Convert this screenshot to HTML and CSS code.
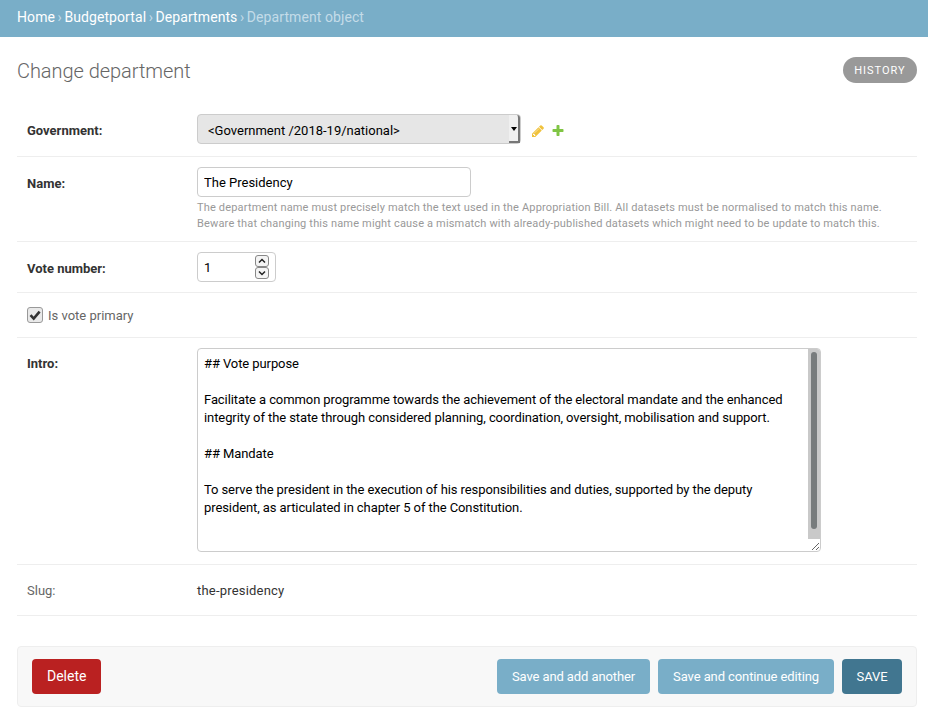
FILE: index.html
```html
<!DOCTYPE html>
<html lang="en">
<head>
  <meta charset="UTF-8" />
  <title>Change department</title>
  <link rel="stylesheet" href="styles.css">
</head>
<body>

  <div class="breadcrumbs">
    <a href="#">Home</a> <span class="sep">›</span>
    <a href="#">Budgetportal</a> <span class="sep">›</span>
    <a href="#">Departments</a> <span class="sep">›</span>
    Department object
  </div>

  <div class="content">
    <div class="title-row">
      <h1>Change department</h1>
      <a class="history" href="#">History</a>
    </div>

    <form>
      <div class="form-row row-government">
        <label class="field-label">Government:</label>
        <div class="select-wrap">
          <select class="select">
            <option>&lt;Government /2018-19/national&gt;</option>
          </select>
          <span class="select-btn"><span class="select-arrow"></span></span>
        </div>
        <a class="rel-link" href="#">
          <svg width="14" height="14" viewBox="0 0 1792 1792"><path fill="#f0c23c" d="M491 1536l91-91-235-235-91 91v107h128v128h107zm523-928q0-22-22-22-10 0-17 7l-542 542q-7 7-7 17 0 22 22 22 10 0 17-7l542-542q7-7 7-17zm-54-192l416 416-832 832h-416v-416zm683 96q0 53-37 90l-166 166-416-416 166-165q36-38 90-38 53 0 91 38l235 234q37 39 37 91z"/></svg>
        </a>
        <a class="rel-link" href="#">
          <svg width="14" height="14" viewBox="0 0 1792 1792"><path fill="#80c544" d="M1600 736v192q0 40-28 68t-68 28h-416v416q0 40-28 68t-68 28h-192q-40 0-68-28t-28-68v-416h-416q-40 0-68-28t-28-68v-192q0-40 28-68t68-28h416v-416q0-40 28-68t68-28h192q40 0 68 28t28 68v416h416q40 0 68 28t28 68z"/></svg>
        </a>
      </div>

      <div class="form-row row-name">
        <label class="field-label label-input">Name:</label>
        <div>
          <input class="text-input name-input" type="text" value="The Presidency" />
          <p class="help">The department name must precisely match the text used in the Appropriation Bill. All datasets must be normalised to match this name.<br>Beware that changing this name might cause a mismatch with already-published datasets which might need to be update to match this.</p>
        </div>
      </div>

      <div class="form-row">
        <label class="field-label label-input">Vote number:</label>
        <div class="number-wrap">
          <input class="text-input number-input" type="text" value="1" />
          <span class="spinner">
            <span class="spin-btn"><svg width="8" height="6" viewBox="0 0 8 6"><path d="M1 4.5 4 1.5 7 4.5" fill="none" stroke="#222" stroke-width="1.5"/></svg></span>
            <span class="spin-btn"><svg width="8" height="6" viewBox="0 0 8 6"><path d="M1 1.5 4 4.5 7 1.5" fill="none" stroke="#222" stroke-width="1.5"/></svg></span>
          </span>
        </div>
      </div>

      <div class="form-row row-check">
        <span class="checkbox">
          <svg width="12" height="12" viewBox="0 0 12 12"><path d="M1.5 6.2 4.7 9.6 10.6 2.6" fill="none" stroke="#333" stroke-width="2.6"/></svg>
        </span>
        <label class="check-label">Is vote primary</label>
      </div>

      <div class="form-row row-intro">
        <label class="field-label label-intro">Intro:</label>
        <div class="intro-wrap">
          <textarea class="intro" spellcheck="false">## Vote purpose

Facilitate a common programme towards the achievement of the electoral mandate and the enhanced integrity of the state through considered planning, coordination, oversight, mobilisation and support.

## Mandate

To serve the president in the execution of his responsibilities and duties, supported by the deputy president, as articulated in chapter 5 of the Constitution.</textarea>
          <span class="scrollbar"><span class="scrollbar-thumb"></span></span>
        </div>
      </div>

      <div class="form-row row-slug">
        <label class="slug-label">Slug:</label>
        <div class="readonly">the-presidency</div>
      </div>

      <div class="submit-row">
        <a class="btn btn-delete" href="#">Delete</a>
        <span class="spacer"></span>
        <a class="btn" href="#">Save and add another</a>
        <a class="btn" href="#">Save and continue editing</a>
        <a class="btn btn-save" href="#">SAVE</a>
      </div>
    </form>
  </div>

</body>
</html>
```

FILE: styles.css
```css
* { box-sizing: border-box; }
html, body { height: 710px; overflow: hidden; }
body { margin: 0; font-family: Roboto, "Liberation Sans", sans-serif; font-size: 14px; color: #333; background: #fff; }
a { text-decoration: none; }

.breadcrumbs { height: 37px; padding: 0 17px; background: #79aec8; color: #c4dce8; font-size: 14px; line-height: 34px; letter-spacing: 0.08px; }
.breadcrumbs a { color: #fff; }
.breadcrumbs .sep { margin: 0 -1px; }

.content { padding: 0 11px 0 17px; }
.title-row { display: flex; justify-content: space-between; align-items: flex-start; height: 67px; padding-top: 20px; }
h1 { margin: 0; font-size: 20px; font-weight: 300; line-height: 28px; letter-spacing: -0.05px; color: #666; }
.history { display: block; width: 74px; height: 26px; border-radius: 13px; background: #999; color: #fff; font-size: 11px; line-height: 27px; letter-spacing: 1px; text-align: center; text-transform: uppercase; }

.form-row { display: flex; padding: 10px; border-bottom: 1px solid #eee; font-size: 13px; }
.field-label { width: 170px; flex: none; font-weight: 700; color: #333; }
.label-input { padding-top: 9px; line-height: 16px; }
.label-intro { padding-top: 8px; line-height: 16px; }

.row-government { align-items: center; height: 53px; }
.select-wrap { position: relative; width: 324px; height: 30px; align-self: flex-start; }
.select { display: block; width: 100%; height: 30px; padding: 2px 10px 0; border: 1px solid #ccc; border-radius: 4px; background: #e6e6e6; appearance: none; font-family: Roboto, sans-serif; font-size: 13px; color: #000; }
.select-btn { position: absolute; top: 1px; right: 1px; width: 11px; height: 28px; display: flex; justify-content: center; padding-top: 10px; background: #f0f0f0; border-right: 2px solid #777; border-bottom: 2px solid #777; border-top-right-radius: 3px; }
.select-arrow { width: 0; height: 0; border-left: 3px solid transparent; border-right: 3px solid transparent; border-top: 4px solid #000; margin-top: 2px; }
.rel-link { display: flex; margin: 1px 0 0 10px; }
.rel-link + .rel-link { margin-left: 6px; }

.text-input { display: block; height: 30px; padding: 0 6px; border: 1px solid #ccc; border-radius: 4px; background: #fff; font-family: Roboto, sans-serif; font-size: 13px; color: #000; }
.name-input { width: 274px; }
.row-name { padding-bottom: 9px; }
.help { margin: 3px 0 0; font-size: 11px; line-height: 16px; letter-spacing: 0.17px; color: #999; }

.number-wrap { position: relative; width: 79px; }
.number-input { width: 79px; }
.spinner { position: absolute; top: 3px; right: 7px; display: flex; flex-direction: column; }
.spin-btn { display: flex; align-items: center; justify-content: center; width: 14px; height: 12px; border: 1px solid #888; border-radius: 3px; background: #f4f4f4; }

.row-check { align-items: center; height: 45px; }
.checkbox { display: flex; align-items: center; justify-content: center; width: 16px; height: 16px; border: 1px solid #999; border-radius: 3px; background: #e9e9e9; }
.check-label { margin-left: 5px; color: #666; }

.row-intro { padding-bottom: 12px; }
.intro-wrap { position: relative; width: 624px; height: 204px; }
.intro { display: block; width: 624px; height: 204px; padding: 6px 18px 6px 6px; border: 1px solid #ccc; border-radius: 4px; font-family: Roboto, sans-serif; font-size: 13px; line-height: 18px; letter-spacing: -0.09px; color: #000; resize: vertical; overflow: hidden; }
.scrollbar { position: absolute; top: 1px; right: 1px; width: 12px; height: 190px; padding: 3px; background: #c9c9c9; border-top-right-radius: 3px; }
.scrollbar-thumb { display: block; height: 177px; border-radius: 3px; background: #787c7d; }

.row-slug { height: 51px; align-items: center; color: #666; }
.slug-label { width: 170px; flex: none; color: #666; }
.readonly { letter-spacing: 0.2px; color: #333; }

.submit-row { display: flex; gap: 8px; align-items: center; height: 61px; margin-top: 30px; padding: 0 14px; background: #f8f8f8; border: 1px solid #eee; border-radius: 4px; }
.spacer { flex: 1; }
.btn { display: block; height: 35px; padding: 0 15px; border-radius: 4px; background: #79aec8; color: #fff; font-size: 13px; line-height: 35px; letter-spacing: -0.1px; }
.btn-delete { background: #ba2121; font-size: 14px; letter-spacing: 0; }
.btn-save { width: 60px; padding: 0; text-align: center; background: #417690; }
```
